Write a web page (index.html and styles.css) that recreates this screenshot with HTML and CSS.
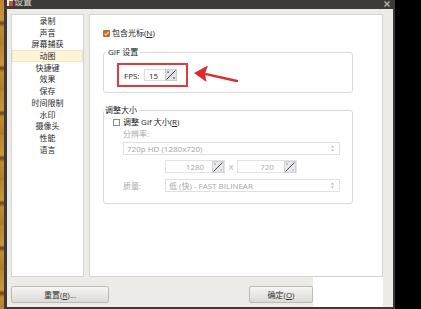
FILE: index.html
```html
<!DOCTYPE html>
<html lang="zh">
<head>
    <meta charset="UTF-8">
    <meta name="viewport" content="width=device-width, initial-scale=1.0">
    <title>设置</title>
    <link rel="stylesheet" href="styles.css">
</head>
<body>
    <div class="wallpaper"></div>
    <div class="window">
        <div class="titlebar">
            <span class="app-icon"></span>
            <span class="title">设置</span>
            <svg class="close" width="6" height="6" viewBox="0 0 6 6"><path d="M0.5 0.5 L5.5 5.5 M5.5 0.5 L0.5 5.5" stroke="#b9b6ae" stroke-width="1.4"/></svg>
        </div>

        <div class="main">
            <ul class="nav">
                <li>录制</li>
                <li>声音</li>
                <li>屏幕捕获</li>
                <li class="active">动图</li>
                <li>快捷键</li>
                <li>效果</li>
                <li>保存</li>
                <li>时间限制</li>
                <li>水印</li>
                <li>摄像头</li>
                <li>性能</li>
                <li>语言</li>
            </ul>

            <div class="content">
                <label class="check-row cursor-row">
                    <svg class="checkbox" width="7" height="7" viewBox="0 0 7 7"><rect width="7" height="7" rx="1" fill="#c8692c"/><path d="M1.5 3.6 L3 5 L5.6 1.8" stroke="#f6dcc4" stroke-width="1.1" fill="none"/></svg>
                    <span>包含光标(<u>N</u>)</span>
                </label>

                <div class="group gif-group">
                    <div class="group-title">GIF 设置</div>
                    <div class="fps-box">
                        <span class="fps-label">FPS:</span>
                        <div class="spin-input fps-input">
                            <span class="spin-value">15</span>
                            <svg class="spinner" width="12" height="12" viewBox="0 0 12 12"><rect x="0.5" y="0.5" width="11" height="11" fill="#e4e4e4" stroke="#cbcbcb"/><path d="M1.5 10.5 L10.5 1.5" stroke="#2a3466" stroke-width="1"/><path d="M3 2 L4.2 3.6 H1.8 Z M9 10 L10.2 8.4 H7.8 Z" fill="#333"/></svg>
                        </div>
                    </div>
                </div>

                <div class="group resize-group">
                    <div class="group-title">调整大小</div>
                    <label class="check-row resize-check">
                        <span class="checkbox-empty"></span>
                        <span>调整 Gif 大小(<u>R</u>)</span>
                    </label>
                    <div class="muted field-label">分辨率:</div>
                    <div class="select wide-select">
                        <span>720p HD (1280x720)</span>
                        <svg width="5" height="7" viewBox="0 0 5 7"><path d="M2.5 0.5 L4 2.5 H1 Z M2.5 6.5 L4 4.5 H1 Z" fill="#b5b5b5"/></svg>
                    </div>
                    <div class="size-row">
                        <div class="spin-input size-input">
                            <span class="spin-value">1280</span>
                            <svg class="spinner" width="12" height="12" viewBox="0 0 12 12"><rect x="0.5" y="0.5" width="11" height="11" fill="#e8e8e8" stroke="#d2d2d2"/><path d="M1.5 10.5 L10.5 1.5" stroke="#3b4677" stroke-width="1"/><path d="M3 2 L4.2 3.6 H1.8 Z M9 10 L10.2 8.4 H7.8 Z" fill="#999"/></svg>
                        </div>
                        <span class="muted times">X</span>
                        <div class="spin-input size-input">
                            <span class="spin-value">720</span>
                            <svg class="spinner" width="12" height="12" viewBox="0 0 12 12"><rect x="0.5" y="0.5" width="11" height="11" fill="#e8e8e8" stroke="#d2d2d2"/><path d="M1.5 10.5 L10.5 1.5" stroke="#3b4677" stroke-width="1"/><path d="M3 2 L4.2 3.6 H1.8 Z M9 10 L10.2 8.4 H7.8 Z" fill="#999"/></svg>
                        </div>
                    </div>
                    <div class="quality-row">
                        <span class="muted quality-label">质量:</span>
                        <div class="select quality-select">
                            <span>低 (快) - FAST BILINEAR</span>
                            <svg width="5" height="7" viewBox="0 0 5 7"><path d="M2.5 0.5 L4 2.5 H1 Z M2.5 6.5 L4 4.5 H1 Z" fill="#b5b5b5"/></svg>
                        </div>
                    </div>
                </div>

                <!-- red annotation arrow -->
                <svg class="arrow" width="46" height="22" viewBox="0 0 46 22">
                    <path d="M44 19 L13 12.2" stroke="#e02a2a" stroke-width="2.4" stroke-linecap="round"/>
                    <path d="M1 11 L15 3.5 L12 11.8 L13.5 20 Z" fill="#e02a2a"/>
                </svg>
            </div>
        </div>

        <div class="footer">
            <button class="btn reset-btn">重置(<u>R</u>)...</button>
            <button class="btn ok-btn">确定(<u>O</u>)</button>
        </div>

        <div class="white-patch"></div>
    </div>
</body>
</html>
```

FILE: styles.css
```css
body {
    margin: 0;
    width: 421px;
    height: 309px;
    overflow: hidden;
    background: #000;
    display: flex;
    font-family: "Open Sans", "Noto Sans CJK SC", sans-serif;
    font-size: 8px;
    color: #222;
}
.wallpaper {
    width: 4px;
    background: repeating-linear-gradient(180deg, #b98432 0, #c9953f 20px, #6b4412 23px, #c08b38 27px, #b07a2c 45px);
}
.window {
    position: relative;
    width: 391px;
    height: 309px;
    box-sizing: border-box;
    border-left: 3px solid #3a3935;
    border-right: 2px solid #3a3935;
    border-bottom: 2px solid #3a3935;
    background: #edebe7;
    display: flex;
    flex-direction: column;
}
.titlebar {
    height: 9px;
    background: #3c3b37;
    display: flex;
    align-items: flex-start;
    overflow: hidden;
}
.app-icon {
    width: 6px;
    height: 6px;
    background: #d8482b;
    box-shadow: inset 2px 1px 0 #f2f2f2;
}
.title {
    margin: -4px 0 0 1px;
    font-size: 9px;
    line-height: 12px;
    color: #dfdbd2;
}
.close {
    margin: 1px 3px 0 auto;
}
.main {
    display: flex;
    gap: 5px;
    padding: 5px 10px 0 4px;
    height: 263px;
}
.nav {
    list-style: none;
    margin: 0;
    padding: 0;
    width: 73px;
    box-sizing: border-box;
    background: #fff;
    border: 1px solid #d6d4cf;
}
.nav li {
    line-height: 11.7px;
    height: 11.7px;
    text-align: center;
    color: #2a2a2a;
}
.nav li.active {
    background: #fdf4da;
    box-shadow: inset 0 0 0 1px #f4e6bc;
}
.content {
    position: relative;
    width: 294px;
    box-sizing: border-box;
    background: #fff;
    border: 1px solid #d6d4cf;
    padding-top: 12px;
}
.check-row {
    display: flex;
    align-items: center;
    line-height: 12px;
    gap: 1px;
}
.cursor-row {
    margin-left: 13px;
}
.checkbox {
    margin-right: 1px;
}
.checkbox-empty {
    width: 5px;
    height: 5px;
    border: 1px solid #8a8a8a;
    background: #fff;
    margin-right: 2px;
}
.group {
    margin: 13px 29px 0 13px;
    border: 1px solid #d9d9d9;
    border-radius: 3px;
}
.group-title {
    width: max-content;
    margin: -7px 0 0 2px;
    padding: 0 2px;
    line-height: 12px;
    background: #fff;
}
.resize-group .group-title {
    margin-left: 0;
    padding-left: 1px;
}
.gif-group {
    padding-bottom: 5px;
}
.fps-box {
    margin: 5px 0 0 13px;
    width: 71px;
    height: 24px;
    box-sizing: border-box;
    border: 2px solid #e23a3a;
    display: flex;
    align-items: center;
    padding-left: 5px;
}
.fps-label {
    width: 20px;
}
.spin-input {
    display: flex;
    align-items: center;
    justify-content: space-between;
    height: 12px;
    box-sizing: border-box;
    border: 1px solid #dcdcdc;
    background: #fff;
}
.fps-input {
    width: 33px;
    padding-left: 4px;
    border-right: none;
}
.size-input {
    width: 60px;
    height: 13px;
    padding-left: 14px;
    border-color: #e2e2e2;
    color: #a8a8a8;
}
.size-input .spin-value {
    width: 30px;
    text-align: center;
}
.resize-group {
    margin-top: 17px;
    padding-bottom: 11px;
}
.resize-check {
    margin-left: 9px;
}
.muted {
    color: #a9a9a9;
}
.field-label {
    margin-left: 19px;
    line-height: 12px;
}
.select {
    display: flex;
    align-items: center;
    justify-content: space-between;
    height: 13px;
    box-sizing: border-box;
    border: 1px solid #e0e0e0;
    padding: 0 4px 0 3px;
    color: #a6a6a6;
}
.wide-select {
    margin: 2px 0 0 19px;
    width: 217px;
}
.size-row {
    display: flex;
    align-items: center;
    margin: 5px 0 0 61px;
}
.times {
    width: 12px;
    text-align: center;
}
.quality-row {
    display: flex;
    align-items: center;
    margin: 6px 0 0 19px;
}
.quality-label {
    width: 42px;
}
.quality-select {
    width: 175px;
}
.arrow {
    position: absolute;
    left: 103px;
    top: 47px;
}
.footer {
    display: flex;
    padding: 9px 0 0 4px;
}
.btn {
    height: 17px;
    padding: 0;
    font-family: inherit;
    font-size: 8px;
    color: #333;
    border: 1px solid #bdbbb5;
    border-radius: 2px;
    background: linear-gradient(#f6f5f3, #dcdad6);
}
.btn u {
    text-decoration-thickness: 1px;
}
.reset-btn {
    width: 98px;
}
.ok-btn {
    width: 64px;
    margin-left: 140px;
}
.white-patch {
    position: absolute;
    left: 306px;
    top: 277px;
    width: 70px;
    height: 30px;
    background: #fff;
}
```
